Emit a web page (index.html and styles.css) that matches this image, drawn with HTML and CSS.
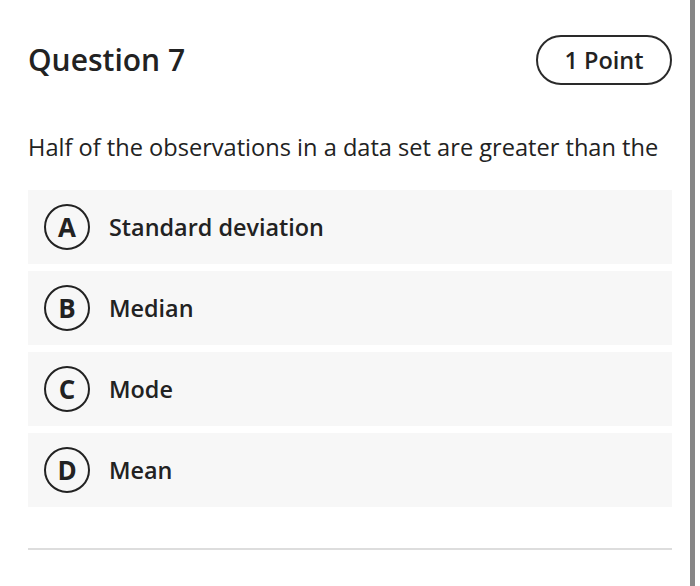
FILE: index.html
```html
<!DOCTYPE html>
<html>
<head>
<meta charset="utf-8">
<link rel="stylesheet" href="styles.css">
</head>
<body>
<div class="page">
  <div class="header">
    <h1 class="title">Question 7</h1>
    <div class="points">1 Point</div>
  </div>
  <p class="question">Half of the observations in a data set are greater than the</p>
  <div class="options">
    <div class="option"><span class="letter">A</span><span class="label">Standard deviation</span></div>
    <div class="option"><span class="letter">B</span><span class="label">Median</span></div>
    <div class="option"><span class="letter">C</span><span class="label">Mode</span></div>
    <div class="option"><span class="letter">D</span><span class="label">Mean</span></div>
  </div>
  <hr class="divider">
</div>
</body>
</html>
```

FILE: styles.css
```css
html, body {
  margin: 0;
  padding: 0;
  background: #ffffff;
}
body {
  font-family: "Open Sans", "Noto Sans", sans-serif;
  color: #222222;
}
.page {
  height: 586px;
  box-sizing: border-box;
  padding: 35px 18px 0 28px;
  width: 695px;
  border-right: 5px solid #878787;
}
.header {
  display: flex;
  align-items: center;
  justify-content: space-between;
}
.title {
  margin: 0;
  font-size: 30px;
  font-weight: 600;
  line-height: 40px;
}
.points {
  box-sizing: border-box;
  width: 136px;
  height: 50px;
  border: 2px solid #2a2a2a;
  border-radius: 25px;
  display: flex;
  align-items: center;
  justify-content: center;
  font-size: 23.5px;
  font-weight: 600;
}
.question {
  margin: 46px 0 0 0;
  font-size: 23.6px;
  line-height: 32px;
  font-weight: 400;
}
.options {
  margin-top: 27px;
  display: flex;
  flex-direction: column;
  gap: 7px;
}
.option {
  height: 74px;
  background: #f7f7f7;
  display: flex;
  align-items: center;
  padding-left: 16px;
}
.letter {
  box-sizing: border-box;
  width: 46px;
  height: 46px;
  border: 2.5px solid #222222;
  border-radius: 50%;
  display: flex;
  align-items: center;
  justify-content: center;
  font-size: 26px;
  font-weight: 700;
  line-height: 1;
}
.label {
  margin-left: 19px;
  font-size: 23.4px;
  font-weight: 600;
}
.divider {
  margin: 41px 0 0 0;
  border: 0;
  height: 2px;
  background: #dddddd;
}
```
